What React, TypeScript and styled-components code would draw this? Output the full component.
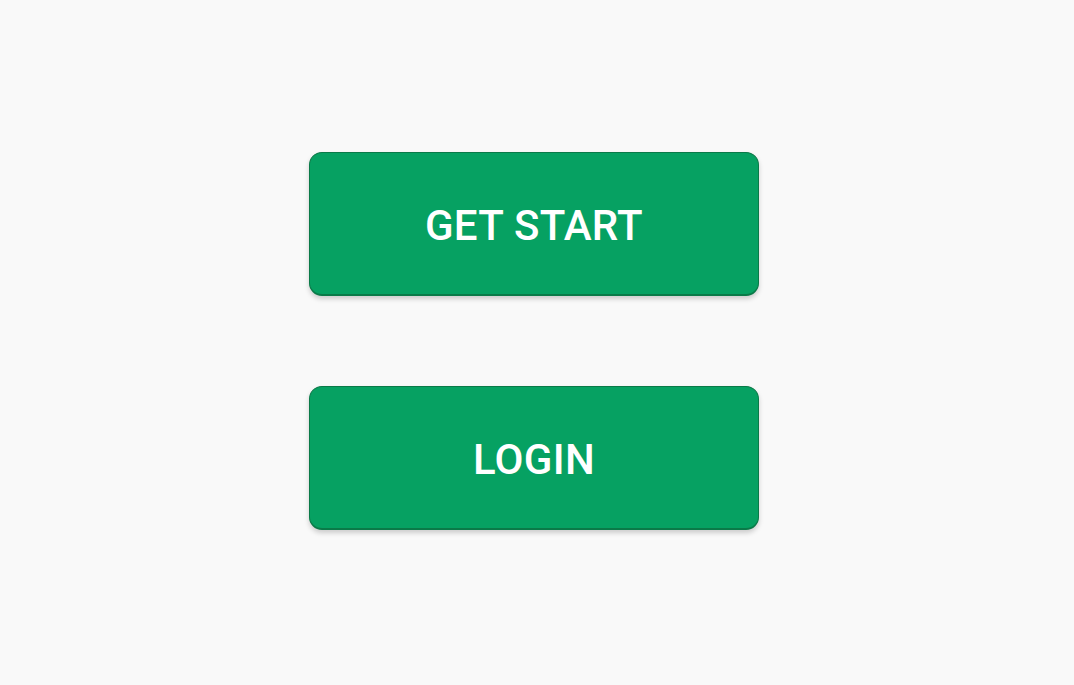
import React from "react";
import styled, { createGlobalStyle } from "styled-components";

const Global = createGlobalStyle`
  html, body { margin: 0; padding: 0; background: #f9f9f9; }
  * { box-sizing: border-box; }
`;

const Page = styled.div`
  width: 1074px;
  height: 685px;
  display: flex;
  flex-direction: column;
  align-items: center;
  justify-content: center;
  gap: 90px;
  padding-right: 6px;
  padding-bottom: 3px;
  background: #f9f9f9;
`;

const Button = styled.button`
  width: 450px;
  height: 144px;
  border: 1.5px solid #0a7a48;
  border-bottom-width: 2px;
  border-radius: 13px;
  background: #06a162;
  color: #ffffff;
  font-family: Roboto, "Liberation Sans", sans-serif;
  font-weight: 500;
  font-size: 42px;
  letter-spacing: 0.3px;
  text-transform: uppercase;
  box-shadow: 0 3px 5px rgba(0, 0, 0, 0.18);
  cursor: pointer;
  display: flex;
  align-items: center;
  justify-content: center;
  padding: 4px 0 0;
`;

export default function App() {
  return (
    <>
      <Global />
      <Page>
        <Button>GET START</Button>
        <Button>LOGIN</Button>
      </Page>
    </>
  );
}
